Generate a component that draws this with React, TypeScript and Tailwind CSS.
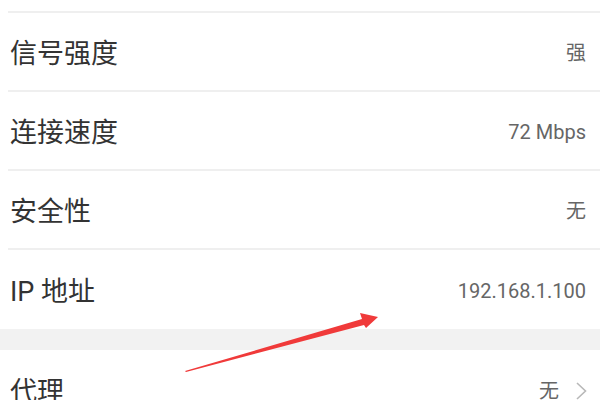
const rows = [
  { label: '信号强度', value: '强' },
  { label: '连接速度', value: '72 Mbps' },
  { label: '安全性', value: '无' },
  { label: 'IP 地址', value: '192.168.1.100' },
];

const font = { fontFamily: 'Roboto, "Noto Sans CJK SC", sans-serif' };

const App = () => {
  return (
    <div className="relative w-[600px] h-[400px] overflow-hidden bg-white" style={font}>
      {/* tail of the row above */}
      <div className="h-[13px] ml-[8px] border-b-2 border-[#efefef]" />

      <div className="flex flex-col">
        {rows.map((row, i) => (
          <div
            key={row.label}
            className={`ml-[8px] flex items-center justify-between h-[79px] pl-[2px] pr-[14px] ${
              i < rows.length - 1 ? 'border-b-2 border-[#efefef]' : ''
            }`}
          >
            <span className="text-[27px] text-[#333333] pt-[6px]">{row.label}</span>
            <span className="text-[20px] text-[#666666] pt-[2px]">{row.value}</span>
          </div>
        ))}
      </div>

      {/* section gap */}
      <div className="h-[21px] bg-[#f2f2f2]" />

      <div className="ml-[8px] flex items-center justify-between h-[79px] pl-[2px] pr-[13px]">
        <span className="text-[27px] text-[#333333] pt-[6px]">代理</span>
        <span className="flex items-center gap-[17px] text-[20px] text-[#666666] pt-[2px]">
          无
          <svg width="11" height="18" viewBox="0 0 11 18" className="mt-[1px]">
            <polyline points="1,1 9.5,9 1,17" fill="none" stroke="#b8b8b8" strokeWidth="1.6" />
          </svg>
        </span>
      </div>

      {/* red annotation arrow */}
      <svg className="absolute left-0 top-0 pointer-events-none" width="600" height="400">
        <polygon
          points="185,371 362,319 360,313 378,317 366,328 364,325 186,372"
          fill="#f03a3a"
        />
      </svg>
    </div>
  );
};

export default App;
